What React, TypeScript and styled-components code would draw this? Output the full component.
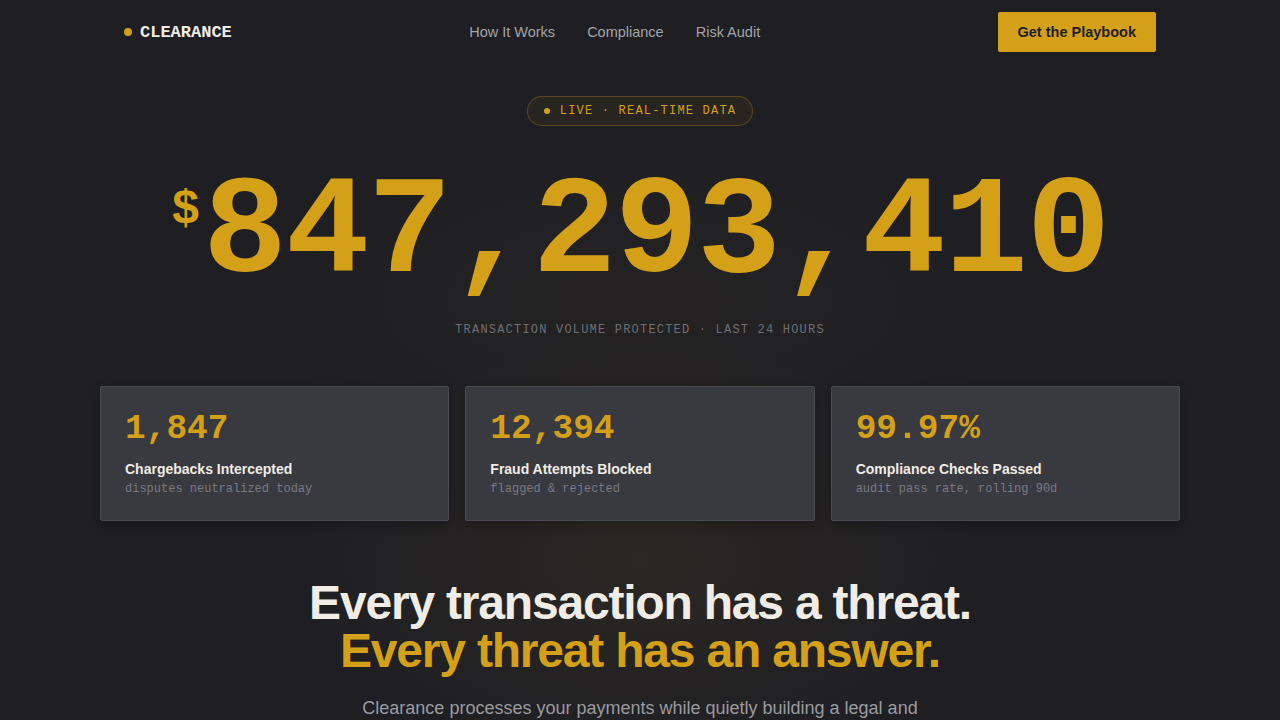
import React from "react";
import styled, { createGlobalStyle } from "styled-components";

const GOLD = "#d4a017";

const Global = createGlobalStyle`
  html, body { margin: 0; padding: 0; }
  body {
    background: #1e1e23;
    color: #f0ede6;
    font-family: "Liberation Sans", Arial, sans-serif;
    -webkit-font-smoothing: antialiased;
  }
  * { box-sizing: border-box; }
`;

const Page = styled.div`
  min-height: 720px;
  background:
    radial-gradient(ellipse 520px 320px at 50% 560px, rgba(212, 160, 23, 0.07), transparent 70%),
    radial-gradient(ellipse 600px 260px at 50% 300px, rgba(212, 160, 23, 0.035), transparent 70%),
    #1e1e23;
  overflow: hidden;
`;

const Container = styled.div`
  max-width: 1080px;
  margin: 0 auto;
`;

const Nav = styled.nav`
  height: 64px;
  padding: 0 24px;
  display: flex;
  justify-content: space-between;
  align-items: center;
`;

const Logo = styled.div`
  display: flex;
  align-items: center;
  gap: 8px;
  font-family: "Liberation Mono", monospace;
  font-weight: 700;
  font-size: 17px;
  color: #f0ede6;
`;

const Dot = styled.span<{ $size: number }>`
  width: ${(p) => p.$size}px;
  height: ${(p) => p.$size}px;
  border-radius: 50%;
  background: ${GOLD};
  flex: none;
`;

const Links = styled.div`
  display: flex;
  gap: 32px;
`;

const NavLink = styled.a`
  font-size: 14.5px;
  color: #a3a3a8;
  text-decoration: none;
`;

const CTA = styled.button`
  height: 40px;
  padding: 0 20px;
  background: ${GOLD};
  border: none;
  border-radius: 2px;
  font-family: "Liberation Sans", Arial, sans-serif;
  font-weight: 700;
  font-size: 14.5px;
  color: #1e1e23;
`;

const Hero = styled.section`
  display: flex;
  flex-direction: column;
  align-items: center;
  padding-top: 32px;
`;

const Badge = styled.div`
  display: flex;
  align-items: center;
  gap: 10px;
  height: 30px;
  padding: 0 16px;
  border-radius: 999px;
  border: 1px solid rgba(212, 160, 23, 0.3);
  background: rgba(212, 160, 23, 0.06);
  font-family: "Liberation Mono", monospace;
  font-size: 12px;
  letter-spacing: 0.1em;
  color: ${GOLD};
`;

const BigNumber = styled.div`
  margin-top: 38px;
  display: flex;
  align-items: flex-start;
  font-family: "Liberation Mono", monospace;
  font-weight: 700;
  color: ${GOLD};
  line-height: 1;
`;

const Currency = styled.span`
  font-size: 48px;
  margin-top: 22px;
  margin-right: 3px;
`;

const Digits = styled.span`
  font-size: 140px;
  letter-spacing: -0.012em;
`;

const Caption = styled.div`
  margin-top: 19px;
  font-family: "Liberation Mono", monospace;
  font-size: 12px;
  letter-spacing: 0.1em;
  color: #6e6e74;
`;

const Stats = styled.div`
  margin-top: 49px;
  display: grid;
  grid-template-columns: repeat(3, 1fr);
  gap: 16px;
`;

const Card = styled.div`
  height: 135px;
  padding: 22px 24px;
  background: #393940;
  border: 1px solid #4a4a52;
  border-radius: 2px;
  box-shadow: 0 4px 12px rgba(0, 0, 0, 0.25);
`;

const CardValue = styled.div`
  font-family: "Liberation Mono", monospace;
  font-weight: 700;
  font-size: 34.5px;
  line-height: 40px;
  color: ${GOLD};
`;

const CardTitle = styled.div`
  margin-top: 12px;
  font-weight: 700;
  font-size: 14px;
  color: #f0ede6;
`;

const CardSub = styled.div`
  margin-top: 5px;
  font-family: "Liberation Mono", monospace;
  font-size: 12px;
  color: #7a7a80;
`;

const Headline = styled.h1`
  margin: 58px 0 0;
  text-align: center;
  font-size: 48px;
  line-height: 48px;
  font-weight: 700;
  letter-spacing: -0.025em;
`;

const Line = styled.span<{ $gold?: boolean }>`
  display: block;
  color: ${(p) => (p.$gold ? GOLD : "#f0ede6")};
`;

const Lead = styled.p`
  margin: 19px auto 0;
  max-width: 600px;
  text-align: center;
  font-size: 18px;
  line-height: 28px;
  color: #9a9aa0;
`;

const stats = [
  { v: "1,847", t: "Chargebacks Intercepted", s: "disputes neutralized today" },
  { v: "12,394", t: "Fraud Attempts Blocked", s: "flagged & rejected" },
  { v: "99.97%", t: "Compliance Checks Passed", s: "audit pass rate, rolling 90d" },
];

export default function App() {
  return (
    <Page>
      <Global />
      <Container>
        <Nav>
          <Logo>
            <Dot $size={8} />
            CLEARANCE
          </Logo>
          <Links>
            <NavLink href="#">How It Works</NavLink>
            <NavLink href="#">Compliance</NavLink>
            <NavLink href="#">Risk Audit</NavLink>
          </Links>
          <CTA>Get the Playbook</CTA>
        </Nav>
        <Hero>
          <Badge>
            <Dot $size={6} />
            LIVE · REAL-TIME DATA
          </Badge>
          <BigNumber>
            <Currency>$</Currency>
            <Digits>847,293,410</Digits>
          </BigNumber>
          <Caption>TRANSACTION VOLUME PROTECTED · LAST 24 HOURS</Caption>
        </Hero>
        <Stats>
          {stats.map((s) => (
            <Card key={s.t}>
              <CardValue>{s.v}</CardValue>
              <CardTitle>{s.t}</CardTitle>
              <CardSub>{s.s}</CardSub>
            </Card>
          ))}
        </Stats>
        <Headline>
          <Line>Every transaction has a threat.</Line>
          <Line $gold>Every threat has an answer.</Line>
        </Headline>
        <Lead>
          Clearance processes your payments while quietly building a legal and
          regulatory shield around every transaction.
        </Lead>
      </Container>
    </Page>
  );
}
